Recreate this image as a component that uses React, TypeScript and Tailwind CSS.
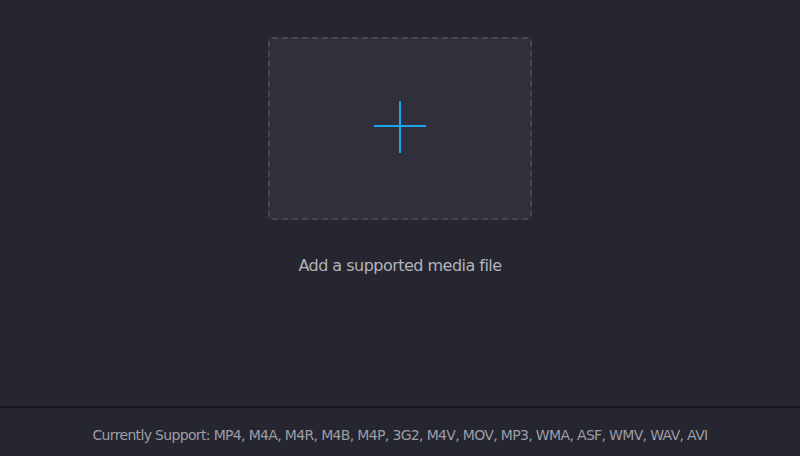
import React from 'react';

const formats = ['MP4', 'M4A', 'M4R', 'M4B', 'M4P', '3G2', 'M4V', 'MOV', 'MP3', 'WMA', 'ASF', 'WMV', 'WAV', 'AVI'];

export default function App() {
    return (
        <div className="flex flex-col h-[456px] w-[800px] bg-[#262630] font-['DejaVu_Sans',Verdana,sans-serif]">
            {/* Drop area */}
            <main className="flex-1 flex flex-col items-center pt-[37px]">
                <button className="w-[264px] h-[183px] rounded-[4px] border-2 border-dashed border-[#464753] bg-[#30303c] flex items-center justify-center">
                    <svg width="54" height="54" viewBox="0 0 54 54" className="mb-[4px]">
                        <path d="M1 26h52M27 1v52" stroke="#1ba3ec" strokeWidth="2" />
                    </svg>
                </button>
                <p className="mt-[34px] text-[16px] text-[#b3b3bb] tracking-[-0.52px]">Add a supported media file</p>
            </main>

            {/* Footer */}
            <footer className="h-[50px] border-t-2 border-[#17171d] flex items-center justify-center pt-[6px]">
                <span className="text-[14px] text-[#9d9da6] tracking-[-0.66px]">
                    Currently Support: {formats.join(', ')}
                </span>
            </footer>
        </div>
    );
}
